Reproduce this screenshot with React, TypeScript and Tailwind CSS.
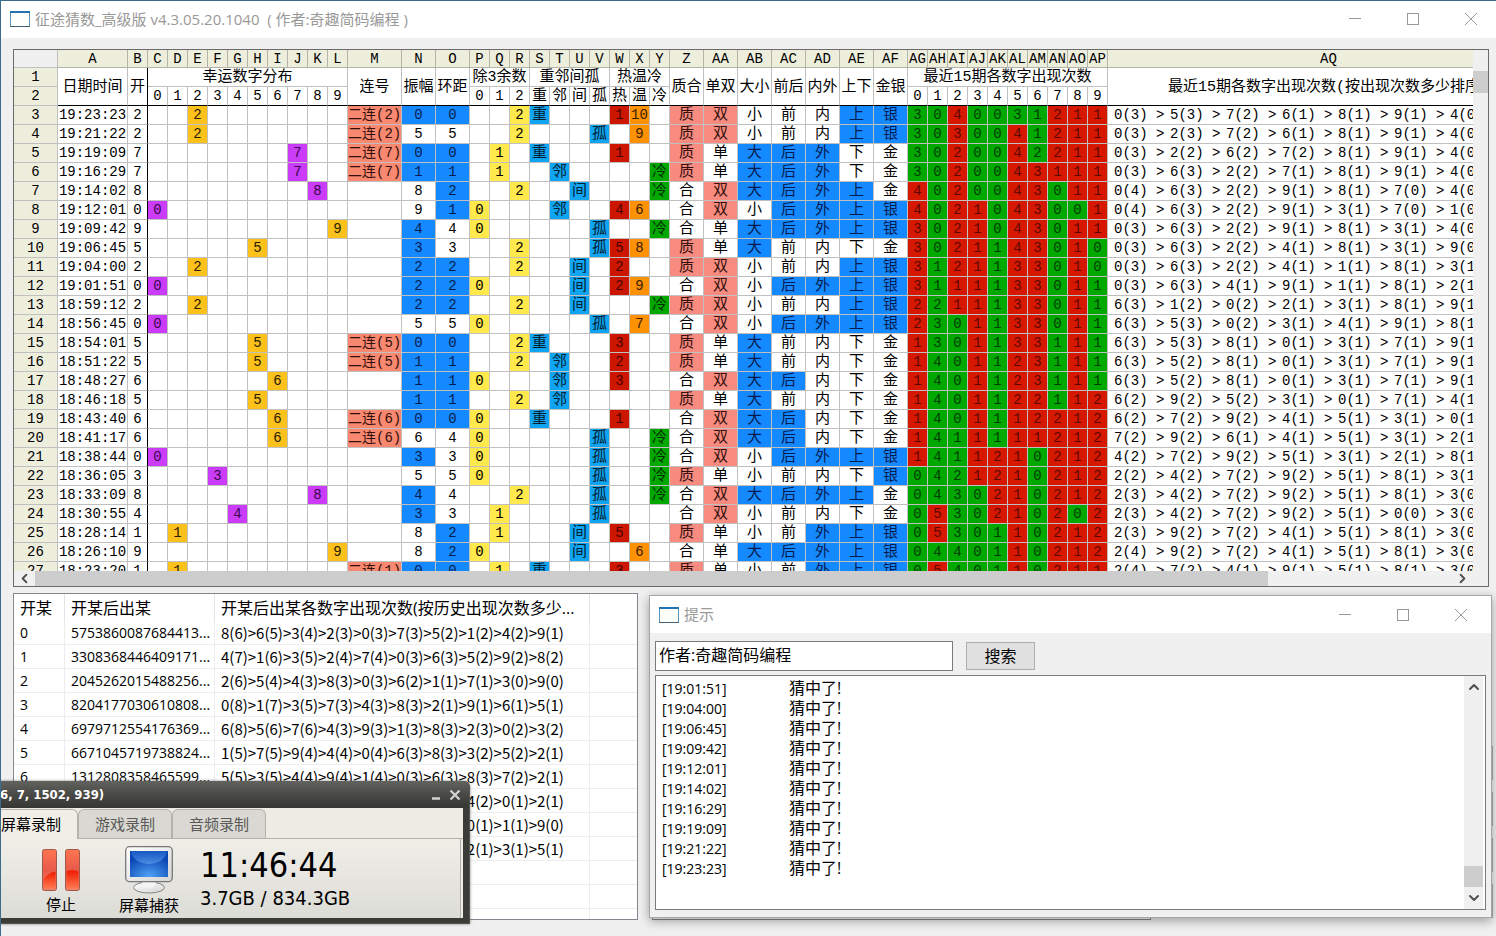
import React from "react";
import { ChevronDown, ChevronLeft, ChevronRight, ChevronUp } from "lucide-react";

type Draw = {
  time: string;
  digit: number;
  amp: number;
  streak?: boolean;
  hot?: number;
  warm?: number;
  cold?: boolean;
  counts: string;
  tones: string;
  rank: string;
};

const draws: Draw[] = [
  { time: "19:23:23", digit: 2, amp: 0, streak: true, hot: 1, warm: 10, counts: "3040031211", tones: "GGRGGGGRRR", rank: "03 53 72 61 81 91 40" },
  { time: "19:21:22", digit: 2, amp: 5, streak: true, warm: 9, counts: "3030041211", tones: "GGRGGRGRRR", rank: "03 23 72 61 81 91 40" },
  { time: "19:19:09", digit: 7, amp: 0, streak: true, hot: 1, counts: "3020042211", tones: "GGRGGRGRRR", rank: "03 22 62 72 81 91 40" },
  { time: "19:16:29", digit: 7, amp: 1, streak: true, cold: true, counts: "3020043111", tones: "GGRGGRRRRR", rank: "03 63 22 71 81 91 40" },
  { time: "19:14:02", digit: 8, amp: 8, cold: true, counts: "4020043011", tones: "RGRGGRRGRR", rank: "04 63 22 91 81 70 40" },
  { time: "19:12:01", digit: 0, amp: 9, hot: 4, warm: 6, counts: "4021043001", tones: "RGRRGRRGGR", rank: "04 63 22 91 31 70 10" },
  { time: "19:09:42", digit: 9, amp: 4, cold: true, counts: "3021043011", tones: "RGRRGRRGRR", rank: "03 63 22 91 81 31 40" },
  { time: "19:06:45", digit: 5, amp: 3, hot: 5, warm: 8, counts: "3021143010", tones: "RGRRGRRGRG", rank: "03 63 22 41 81 31 90" },
  { time: "19:04:00", digit: 2, amp: 2, hot: 2, counts: "3121133010", tones: "RGRRGRRGRG", rank: "03 63 22 41 11 81 31" },
  { time: "19:01:51", digit: 0, amp: 2, hot: 2, warm: 9, counts: "3111133011", tones: "RGRRGRRGRG", rank: "03 63 41 91 11 81 21" },
  { time: "18:59:12", digit: 2, amp: 2, cold: true, counts: "2211133011", tones: "RGRRGRRGRG", rank: "63 12 02 21 31 81 91" },
  { time: "18:56:45", digit: 0, amp: 5, warm: 7, counts: "2301133011", tones: "RGGRGRRGRG", rank: "63 53 02 31 41 91 81" },
  { time: "18:54:01", digit: 5, amp: 0, streak: true, hot: 3, counts: "1301133111", tones: "RGGRGRRGRG", rank: "63 53 81 01 31 71 91" },
  { time: "18:51:22", digit: 5, amp: 1, streak: true, hot: 2, counts: "1401123111", tones: "RGGRGRRGRG", rank: "63 52 81 01 31 71 91" },
  { time: "18:48:27", digit: 6, amp: 1, hot: 3, counts: "1401123111", tones: "RGGRGRRGRG", rank: "63 52 81 01 31 71 91" },
  { time: "18:46:18", digit: 5, amp: 1, counts: "1401122112", tones: "RGGRGRRGRR", rank: "62 92 52 31 01 71 41" },
  { time: "18:43:40", digit: 6, amp: 0, streak: true, hot: 1, counts: "1401112212", tones: "RGGRGRRRRR", rank: "62 72 92 41 51 31 01" },
  { time: "18:41:17", digit: 6, amp: 6, streak: true, cold: true, counts: "1411111212", tones: "RGGRGRRRRR", rank: "72 92 61 41 51 31 21" },
  { time: "18:38:44", digit: 0, amp: 3, cold: true, counts: "1411210212", tones: "RGGRRRGRRR", rank: "42 72 92 51 31 21 81" },
  { time: "18:36:05", digit: 3, amp: 5, cold: true, counts: "0421210212", tones: "GGGRRRGRRR", rank: "22 42 72 92 51 81 31" },
  { time: "18:33:09", digit: 8, amp: 4, cold: true, counts: "0430210212", tones: "GGGGRRGRRR", rank: "23 42 72 92 51 81 30" },
  { time: "18:30:55", digit: 4, amp: 3, counts: "0530210202", tones: "GRGGRRGRGR", rank: "23 42 72 92 51 00 30" },
  { time: "18:28:14", digit: 1, amp: 8, hot: 5, counts: "0530110212", tones: "GRGGGRGRRR", rank: "23 92 72 41 51 81 30" },
  { time: "18:26:10", digit: 9, amp: 8, warm: 6, counts: "0440110212", tones: "GGGGGRGRRR", rank: "24 92 72 41 51 81 30" },
  { time: "18:23:20", digit: 1, amp: 0, streak: true, hot: 3, counts: "0540110211", tones: "GRGGGRGRRR", rank: "24 72 41 91 51 81 30" },
];

const ten = [0, 1, 2, 3, 4, 5, 6, 7, 8, 9];

const columns: [string, number][] = [
  ["A", 70], ["B", 20],
  ...["C", "D", "E", "F", "G", "H", "I", "J", "K", "L"].map((n) => [n, 20] as [string, number]),
  ["M", 54], ["N", 34], ["O", 34],
  ...["P", "Q", "R", "S", "T", "U", "V", "W", "X", "Y"].map((n) => [n, 20] as [string, number]),
  ...["Z", "AA", "AB", "AC", "AD", "AE", "AF"].map((n) => [n, 34] as [string, number]),
  ...["AG", "AH", "AI", "AJ", "AK", "AL", "AM", "AN", "AO", "AP"].map((n) => [n, 20] as [string, number]),
  ["AQ", 442],
];
const tableWidth = 44 + columns.reduce((sum, c) => sum + c[1], 0);

const MONO = "font-['Liberation_Mono','Noto_Sans_CJK_SC',monospace]";
const UI = "font-['Open_Sans','Noto_Sans_CJK_SC',sans-serif]";

const CELL = "border-r border-b border-[#c0c0c0] p-0 text-center font-normal whitespace-nowrap overflow-hidden";
const NUM = "text-[14px] leading-[18px]";
const HAN = "text-[15px] leading-4 pt-0.5";
const BLUE = "bg-[#1589ff] text-[#061c50]";
const SALMON = "bg-[#f88b80] text-[#33100c]";
const YELLOW = "bg-[#ffe94c]";
const SKY = "bg-[#0fa5f2] text-[#03202f]";

function Cell({ children, tone = "", size = NUM }: { children?: React.ReactNode; tone?: string; size?: string }) {
  return <td className={`${CELL} ${size} ${tone}`}>{children}</td>;
}

function DrawRow({ d, index }: { d: Draw; index: number }) {
  const n = d.digit;
  const ring = Math.min(d.amp, 10 - d.amp);
  const relation = Math.min(ring, 3);
  const prime = [1, 2, 3, 5, 7].includes(n);
  const pairs: [string, string][] = [
    [prime ? "质" : "合", prime ? SALMON : ""],
    [n % 2 ? "单" : "双", n % 2 ? "" : SALMON],
    [n >= 5 ? "大" : "小", n >= 5 ? BLUE : ""],
    n === 0 || n >= 6 ? ["后", BLUE] : ["前", ""],
    n <= 1 || n >= 7 ? ["外", BLUE] : ["内", ""],
    n <= 2 || n >= 8 ? ["上", BLUE] : ["下", ""],
    n <= 3 || n === 9 ? ["银", BLUE] : ["金", ""],
  ];
  const violet = [0, 3, 4, 7, 8].includes(n);
  return (
    <tr className="h-[19px]">
      <th scope="row" className={`${CELL} ${NUM} bg-[#eeeedd]`}>{index}</th>
      <Cell>{d.time}</Cell>
      <td className={`${CELL} ${NUM} border-r-black`}>{n}</td>
      {ten.map((k) => (
        <Cell key={k} tone={k === n ? (violet ? "bg-[#cb3cf8] text-[#3a0850]" : "bg-[#fdc11c] text-[#2a1c00]") : ""}>
          {k === n ? n : null}
        </Cell>
      ))}
      <Cell tone={d.streak ? "bg-[#f8886f] text-[#33100c]" : ""}>{d.streak ? `二连(${n})` : null}</Cell>
      <Cell tone={d.amp <= 4 ? BLUE : ""}>{d.amp}</Cell>
      <Cell tone={ring <= 2 ? BLUE : ""}>{ring}</Cell>
      {[0, 1, 2].map((k) => (
        <Cell key={k} tone={n % 3 === k ? YELLOW : ""}>{n % 3 === k ? k : null}</Cell>
      ))}
      {["重", "邻", "间", "孤"].map((label, k) => (
        <Cell key={label} size={HAN} tone={relation === k ? SKY : ""}>{relation === k ? label : null}</Cell>
      ))}
      <Cell tone={d.hot ? "bg-[#cc1600] text-[#4a0400]" : ""}>{d.hot}</Cell>
      <Cell tone={d.warm ? "bg-[#ff9204] text-[#3a1c00]" : ""}>{d.warm}</Cell>
      <Cell size={HAN} tone={d.cold ? "bg-[#00a800] text-[#003000]" : ""}>{d.cold ? "冷" : null}</Cell>
      {pairs.map(([label, tone]) => (
        <Cell key={label} size={HAN} tone={tone}>{label}</Cell>
      ))}
      {ten.map((k) => (
        <Cell key={k} tone={d.tones[k] === "R" ? "bg-[#d61800] text-[#5c0800]" : "bg-[#00a800] text-[#003c00]"}>{d.counts[k]}</Cell>
      ))}
      <td className={`${CELL} ${NUM}`}>
        <div className="flex pl-1.5 text-left">
          {d.rank.split(" ").map((r, i) => (
            <span key={i} className="flex w-14 shrink-0">
              <span className="w-[42px]">{`${r[0]}(${r[1]})`}</span>
              <span>&gt;</span>
            </span>
          ))}
        </div>
      </td>
    </tr>
  );
}

function HeadTall({ children, edge = "" }: { children: React.ReactNode; edge?: string }) {
  return <th rowSpan={2} className={`${CELL} ${HAN} border-b-black ${edge}`}>{children}</th>;
}

function Sheet() {
  return (
    <div className="ml-3 mr-[7px] border border-[#6a6a6a] bg-[#f0f0f0]">
      <div className="flex">
        <div className="h-[521px] min-w-0 flex-1 overflow-hidden bg-white">
          <table className={`table-fixed border-separate border-spacing-0 text-black ${MONO}`} style={{ width: tableWidth }}>
            <colgroup>
              <col style={{ width: 44 }} />
              {columns.map(([name, width]) => <col key={name} style={{ width }} />)}
            </colgroup>
            <thead>
              <tr className="h-[18px]">
                <td className="border-r border-b border-[#c0c0c0] bg-[#f0f0f0] p-0" />
                {columns.map(([name]) => (
                  <th key={name} scope="col" className="overflow-hidden border-r border-b border-[#b4b4a8] bg-[#eeeedd] p-0 pt-px text-center text-[14px] leading-4 font-normal">{name}</th>
                ))}
              </tr>
              <tr className="h-[19px]">
                <th scope="row" className={`${CELL} ${NUM} bg-[#eeeedd]`}>1</th>
                <HeadTall>日期时间</HeadTall>
                <HeadTall edge="border-r-black">开</HeadTall>
                <th colSpan={10} className={`${CELL} ${HAN}`}>幸运数字分布</th>
                <HeadTall>连号</HeadTall>
                <HeadTall>振幅</HeadTall>
                <HeadTall>环距</HeadTall>
                <th colSpan={3} className={`${CELL} ${HAN}`}>除3余数</th>
                <th colSpan={4} className={`${CELL} ${HAN}`}>重邻间孤</th>
                <th colSpan={3} className={`${CELL} ${HAN}`}>热温冷</th>
                {["质合", "单双", "大小", "前后", "内外", "上下", "金银"].map((t) => <HeadTall key={t}>{t}</HeadTall>)}
                <th colSpan={10} className={`${CELL} ${HAN}`}>最近15期各数字出现次数</th>
                <HeadTall>最近15期各数字出现次数(按出现次数多少排序)</HeadTall>
              </tr>
              <tr className="h-[19px]">
                <th scope="row" className={`${CELL} ${NUM} bg-[#eeeedd]`}>2</th>
                {ten.map((k) => <th key={k} className={`${CELL} ${NUM} border-b-black`}>{k}</th>)}
                {["0", "1", "2"].map((k) => <th key={k} className={`${CELL} ${NUM} border-b-black`}>{k}</th>)}
                {["重", "邻", "间", "孤", "热", "温", "冷"].map((k) => <th key={k} className={`${CELL} ${HAN} border-b-black`}>{k}</th>)}
                {ten.map((k) => <th key={k} className={`${CELL} ${NUM} border-b-black`}>{k}</th>)}
              </tr>
            </thead>
            <tbody>
              {draws.map((d, i) => <DrawRow key={d.time} d={d} index={i + 3} />)}
            </tbody>
          </table>
        </div>
        <div className="w-[15px] shrink-0 pt-[21px]">
          <div className="h-[22px] bg-[#cdcdcd]" />
        </div>
      </div>
      <div className="flex h-[15px] items-center">
        <button aria-label="向左滚动" className="flex w-[21px] justify-center text-[#505050]"><ChevronLeft size={15} strokeWidth={3} /></button>
        <div className="flex h-[15px] min-w-0 flex-1">
          <div className="h-full w-[87%] bg-[#cdcdcd]" />
        </div>
        <button aria-label="向右滚动" className="mr-[15px] flex w-[21px] justify-center text-[#505050]"><ChevronRight size={15} strokeWidth={3} /></button>
      </div>
    </div>
  );
}

const history: [string, string][] = [
  ["5753860087684413...", "8(6)>6(5)>3(4)>2(3)>0(3)>7(3)>5(2)>1(2)>4(2)>9(1)"],
  ["3308368446409171...", "4(7)>1(6)>3(5)>2(4)>7(4)>0(3)>6(3)>5(2)>9(2)>8(2)"],
  ["2045262015488256...", "2(6)>5(4)>4(3)>8(3)>0(3)>6(2)>1(1)>7(1)>3(0)>9(0)"],
  ["8204177030610808...", "0(8)>1(7)>3(5)>7(3)>4(3)>8(3)>2(1)>9(1)>6(1)>5(1)"],
  ["6979712554176369...", "6(8)>5(6)>7(6)>4(3)>9(3)>1(3)>8(3)>2(3)>0(2)>3(2)"],
  ["6671045719738824...", "1(5)>7(5)>9(4)>4(4)>0(4)>6(3)>8(3)>3(2)>5(2)>2(1)"],
  ["1312808358465599...", "5(5)>3(5)>4(4)>9(4)>1(4)>0(3)>6(3)>8(3)>7(2)>2(1)"],
  ["7918563897461350...", "7(6)>9(5)>6(4)>5(4)>1(3)>8(3)>3(3)>4(2)>0(1)>2(1)"],
  ["3826475368242753...", "3(6)>2(5)>8(5)>4(4)>6(3)>7(3)>5(3)>0(1)>1(1)>9(0)"],
  ["9640786940876497...", "9(7)>6(6)>4(5)>0(4)>7(4)>8(3)>2(2)>2(1)>3(1)>5(1)"],
];

function HistoryList() {
  const edge = "border-r border-b border-[#ececec] px-1.5 py-0 whitespace-nowrap";
  return (
    <div className="h-[327px] min-w-0 flex-[625_1_0%] overflow-hidden border border-[#828790] bg-white">
      <table className="w-full table-fixed border-separate border-spacing-0 text-black">
        <colgroup>
          <col className="w-[51px]" />
          <col className="w-[150px]" />
          <col className="w-[375px]" />
          <col />
        </colgroup>
        <thead>
          <tr className="h-[27px] text-left text-[16px]">
            {["开某", "开某后出某", "开某后出某各数字出现次数(按历史出现次数多少..."].map((t) => (
              <th key={t} className="border-r border-[#e4e4e4] px-1.5 py-0 leading-[26px] font-normal whitespace-nowrap">{t}</th>
            ))}
            <td />
          </tr>
        </thead>
        <tbody>
          {history.map(([seq, order], i) => (
            <tr key={seq} className="h-6 leading-[23px]">
              <td className={`${edge} text-[14px]`}>{i}</td>
              <td className={`${edge} text-[14px]`}>{seq}</td>
              <td className={`${edge} font-['Noto_Sans_CJK_SC',sans-serif] text-[15px]`}>{order}</td>
              <td className="border-b border-[#ececec]" />
            </tr>
          ))}
          {[10, 11, 12].map((i) => (
            <tr key={i} className="h-6">
              <td className={edge} /><td className={edge} /><td className={edge} /><td className="border-b border-[#ececec]" />
            </tr>
          ))}
        </tbody>
      </table>
    </div>
  );
}

function WindowIcon() {
  return (
    <svg width="20" height="16" viewBox="0 0 20 16" aria-hidden="true">
      <rect x="0.5" y="0.5" width="19" height="15" fill="#fdfffa" stroke="#5a94bd" />
      <path d="M0 1h20" stroke="#2273b4" strokeWidth="2" />
      <path d="M0 15.5h20" stroke="#44617a" />
    </svg>
  );
}

function WindowButtons() {
  return (
    <div className="flex items-center gap-[46px]">
      <button aria-label="最小化">
        <svg width="12" height="12" viewBox="0 0 12 12"><path d="M0 5.5h12" stroke="#999" /></svg>
      </button>
      <button aria-label="最大化">
        <svg width="12" height="12" viewBox="0 0 12 12"><rect x="0.5" y="0.5" width="11" height="11" fill="none" stroke="#999" /></svg>
      </button>
      <button aria-label="关闭">
        <svg width="12" height="12" viewBox="0 0 12 12"><path d="M0 0l12 12M12 0L0 12" stroke="#999" /></svg>
      </button>
    </div>
  );
}

const hits = ["19:01:51", "19:04:00", "19:06:45", "19:09:42", "19:12:01", "19:14:02", "19:16:29", "19:19:09", "19:21:22", "19:23:23"];

function HintWindow() {
  return (
    <section className="absolute top-[594px] right-1 flex h-[323px] w-[843px] flex-col border border-[#a6a6a6] bg-[#f0f0f0] shadow-[0_3px_10px_rgba(0,0,0,0.35)]">
      <header className="flex h-[37px] items-center bg-white pr-6 pl-[9px]">
        <WindowIcon />
        <h2 className="ml-[5px] flex-1 text-[15px] text-[#999]">提示</h2>
        <WindowButtons />
      </header>
      <div className="flex items-center gap-[13px] px-[5px] pt-2">
        <input aria-label="搜索内容" defaultValue="作者:奇趣简码编程" className="h-[30px] w-[298px] border border-[#7a7a7a] bg-white px-[3px] pb-1 text-[16px] text-black outline-none" />
        <button className="h-7 w-[69px] border border-[#adadad] bg-[#e1e1e1] text-[16px] text-black">搜索</button>
      </div>
      <div className="mx-[5px] mt-1 mb-[7px] flex min-h-0 flex-1 border border-[#7a7a7a] bg-white">
        <ul className="flex-1 pt-0.5 pl-1.5 text-black">
          {hits.map((t) => (
            <li key={t} className="flex h-5 items-center">
              <span className="w-[127px] text-[14px]">[{t}]</span>
              <span className="text-[16px]">猜中了!</span>
            </li>
          ))}
        </ul>
        <div className="mr-0.5 flex w-[19px] flex-col items-center bg-[#f0f0f0] py-[3px] text-[#505050]">
          <button aria-label="向上滚动"><ChevronUp size={16} strokeWidth={3} /></button>
          <div className="flex-1" />
          <div className="mb-[3px] h-[21px] w-full bg-[#cdcdcd]" />
          <button aria-label="向下滚动"><ChevronDown size={16} strokeWidth={3} /></button>
        </div>
      </div>
    </section>
  );
}

function PauseIcon() {
  return (
    <svg width="38" height="42" viewBox="0 0 38 42" aria-hidden="true">
      <defs>
        <linearGradient id="pauseBase" x1="0" y1="0" x2="0" y2="1">
          <stop offset="0" stopColor="#ff7650" /><stop offset="0.5" stopColor="#e8594a" /><stop offset="1" stopColor="#f08468" />
        </linearGradient>
        <linearGradient id="pauseGlow" x1="0" y1="0" x2="0" y2="1">
          <stop offset="0" stopColor="#f01a00" /><stop offset="1" stopColor="#ff7a52" />
        </linearGradient>
      </defs>
      <rect x="0.5" y="0.5" width="14" height="41" rx="2" fill="url(#pauseBase)" stroke="#a05a4c" />
      <rect x="23.5" y="0.5" width="14" height="41" rx="2" fill="url(#pauseBase)" stroke="#a05a4c" />
      <path d="M1.5 30Q6 24 13.500 22.500V39.500H1.500Z" fill="url(#pauseGlow)" />
      <path d="M24.500 22Q31 20.500 36.500 22.500V39.500H24.500Z" fill="url(#pauseGlow)" />
    </svg>
  );
}

function MonitorIcon() {
  return (
    <svg width="48" height="48" viewBox="0 0 48 48" aria-hidden="true">
      <defs>
        <radialGradient id="screenBlue" cx="0.5" cy="0.95" r="0.75">
          <stop offset="0" stopColor="#4fa0f4" /><stop offset="1" stopColor="#0a46b4" />
        </radialGradient>
        <linearGradient id="screenShine" x1="0" y1="0" x2="0" y2="1">
          <stop offset="0" stopColor="#1c60c8" /><stop offset="1" stopColor="#5a9aec" />
        </linearGradient>
        <linearGradient id="monitorFrame" x1="0" y1="0" x2="1" y2="1">
          <stop offset="0" stopColor="#ffffff" /><stop offset="1" stopColor="#d4d4d4" />
        </linearGradient>
      </defs>
      <path d="M17 35h14l2 6H15Z" fill="#dcdcdc" stroke="#8c8c8c" />
      <ellipse cx="24" cy="41.500" rx="15.500" ry="5.500" fill="url(#monitorFrame)" stroke="#858585" />
      <path d="M17 36q1 6 7 6t7-6Z" fill="#f4f4f4" />
      <rect x="0.700" y="0.700" width="46.600" height="35" rx="4" fill="url(#monitorFrame)" stroke="#777" strokeWidth="1.300" />
      <rect x="5" y="5" width="38" height="26" fill="url(#screenBlue)" />
      <path d="M6 5H42Q40 17 24 18Q8 17 6 5Z" fill="url(#screenShine)" opacity="0.75" />
    </svg>
  );
}

function Recorder() {
  const tab = "w-[94px] rounded-t-md border border-b-0 border-[#b4b2aa] bg-[#d9d8d3] text-[15px] text-[#5a5a58]";
  return (
    <section className="absolute top-[780px] -left-px flex h-[143px] w-[470px] flex-col overflow-hidden rounded-tr-md border-r border-b border-[#555550] bg-[#3b3b37] pr-1.5 pb-[5px] shadow-[0_0_3px_rgba(0,0,0,0.5)]">
      <header className="-mr-1.5 flex h-[27px] items-center justify-between bg-linear-to-b from-[#62625e] via-[#494945] to-[#363632] pr-2">
        <h2 className="font-['DejaVu_Sans_Condensed','Open_Sans',sans-serif] text-[13px] font-bold text-white">6, 7, 1502, 939)</h2>
        <div className="flex items-center gap-2">
          <button aria-label="最小化"><svg width="10" height="12" viewBox="0 0 10 12"><path d="M1 9.500h8" stroke="#d0d0cc" strokeWidth="2.400" /></svg></button>
          <button aria-label="关闭"><svg width="12" height="12" viewBox="0 0 12 12"><path d="M1.500 1.500l9 9M10.500 1.500l-9 9" stroke="#d0d0cc" strokeWidth="2.400" /></svg></button>
        </div>
      </header>
      <div className="flex min-h-0 flex-1 flex-col bg-[#efece6]">
        <div role="tablist" className="flex h-[31px] border-b border-[#b4b2aa] pt-px">
          <button role="tab" aria-selected="true" className="-mb-px w-[78px] rounded-tr-md border-t border-r border-[#b4b2aa] bg-[#f1eee8] pr-4 pl-px text-left text-[15px] text-black whitespace-nowrap">屏幕录制</button>
          <button role="tab" aria-selected="false" className={tab}>游戏录制</button>
          <button role="tab" aria-selected="false" className={tab}>音频录制</button>
        </div>
        <div className="mr-0.5 flex flex-1 border-r border-[#b4b2aa] bg-linear-to-b from-[#f1eee8] to-[#dcdcd6] pt-[7px] pl-[22px]">
          <button className="flex w-[78px] flex-col items-center pt-[3px] text-[15px] leading-[26px] text-black"><PauseIcon />停止</button>
          <button className="ml-[14px] flex w-[70px] flex-col items-center text-[15px] leading-[22px] whitespace-nowrap text-black"><MonitorIcon />屏幕捕获</button>
          <div className="ml-4 flex flex-col font-['DejaVu_Sans_Condensed','Noto_Sans',sans-serif] text-black">
            <span className="text-[34px] leading-[38px]">11:46:44</span>
            <span className="text-[20px] leading-[28px]">3.7GB / 834.3GB</span>
          </div>
        </div>
      </div>
    </section>
  );
}

export default function App() {
  return (
    <main className={`relative min-h-screen overflow-hidden border-t border-l border-[#3a6d8c] bg-[#f0f0f0] ${UI}`}>
      <header className="mb-[11px] flex h-[37px] items-center bg-white pr-[19px] pb-px pl-[9px]">
        <WindowIcon />
        <h1 className="ml-[5px] flex-1 text-[15px] whitespace-pre text-[#999]">征途猜数_高级版 v4.3.05.20.1040  ( 作者:奇趣简码编程 )</h1>
        <WindowButtons />
      </header>
      <Sheet />
      <div className="mt-1.5 mr-[3px] ml-3 flex items-end">
        <HistoryList />
        <div className="ml-[14px] h-[300px] flex-[498_1_0%] border border-[#828790] bg-white" />
        <div className="ml-[131px] flex flex-[212_1_0%] flex-col gap-3 pb-0.5">
          {[0, 1, 2, 3].map((k) => <div key={k} className="h-[34px] border border-[#adadad] bg-[#e1e1e1]" />)}
        </div>
      </div>
      <HintWindow />
      <Recorder />
    </main>
  );
}
